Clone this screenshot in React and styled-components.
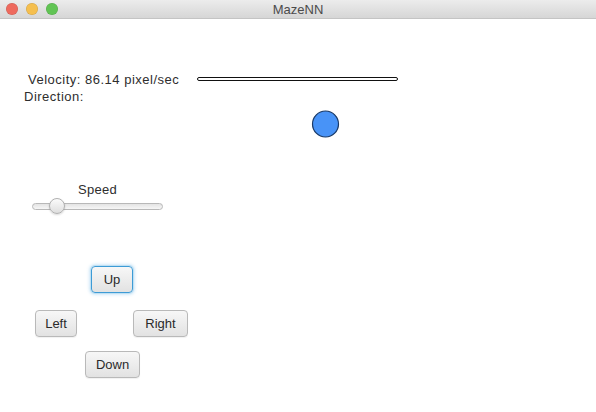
import React from "react";
import styled, { createGlobalStyle } from "styled-components";

const GlobalStyle = createGlobalStyle`
  html, body {
    margin: 0;
    padding: 0;
    background: #ffffff;
  }
  body {
    font-family: "Liberation Sans", Arial, sans-serif;
    overflow: hidden;
  }
`;

const Window = styled.div`
  width: 596px;
  height: 412px;
  display: flex;
  flex-direction: column;
  background: #ffffff;
`;

const TitleBar = styled.div`
  flex: none;
  height: 18px;
  display: grid;
  grid-template-columns: 1fr auto 1fr;
  align-items: center;
  background: linear-gradient(#ececec, #d6d6d6);
  border-bottom: 1px solid #c4c4c4;
`;

const Lights = styled.div`
  display: flex;
  gap: 8px;
  padding-left: 6px;
`;

const Light = styled.span`
  width: 12px;
  height: 12px;
  border-radius: 50%;
  background: ${(p) => p.$color};
  box-shadow: inset 0 0 0 0.5px rgba(0, 0, 0, 0.15);
`;

const Title = styled.div`
  font-size: 13px;
  color: #4b4b4b;
`;

const Content = styled.div`
  flex: 1;
  display: flex;
`;

const LeftPanel = styled.div`
  width: 190px;
  display: flex;
  flex-direction: column;
`;

const Info = styled.div`
  padding-top: 52px;
  font-size: 13px;
  line-height: 17px;
  letter-spacing: 0.5px;
  color: #2e2e2e;
`;

const InfoLine = styled.div`
  padding-left: ${(p) => p.$indent}px;
  white-space: nowrap;
`;

const SpeedBox = styled.div`
  width: 131px;
  margin: 77px 0 0 32px;
  display: flex;
  flex-direction: column;
  align-items: center;
`;

const SpeedLabel = styled.div`
  font-size: 13px;
  line-height: 15px;
  letter-spacing: 0.3px;
  color: #2e2e2e;
`;

const Slider = styled.div`
  position: relative;
  width: 100%;
  height: 16px;
  margin-top: 1px;
  display: flex;
  align-items: center;
`;

const Track = styled.div`
  width: 100%;
  height: 5px;
  border: 1px solid #b8b8b8;
  border-radius: 4px;
  background: linear-gradient(#e4e4e4, #f6f6f6);
`;

const Thumb = styled.div`
  position: absolute;
  top: 0;
  left: ${(p) => p.$pos}px;
  width: 16px;
  height: 16px;
  box-sizing: border-box;
  border-radius: 50%;
  border: 1px solid #b0b0b0;
  background: linear-gradient(#fbfbfb, #dedede);
  box-shadow: 0 1px 2px rgba(0, 0, 0, 0.15);
`;

const DPad = styled.div`
  margin-top: 52px;
  display: flex;
  flex-direction: column;
`;

const PadRow = styled.div`
  display: flex;
  margin-top: ${(p) => p.$top || 0}px;
`;

const Button = styled.button`
  width: ${(p) => p.$w}px;
  height: 27px;
  margin-left: ${(p) => p.$left}px;
  padding: 0;
  box-sizing: border-box;
  font-family: "Liberation Sans", Arial, sans-serif;
  font-size: 13px;
  color: #2a2a2a;
  border-radius: 4px;
  border: 1px solid ${(p) => (p.$focused ? "#3d9bd6" : "#b9b9b9")};
  background: linear-gradient(#f7f7f7, #e2e2e2);
  box-shadow: ${(p) =>
    p.$focused
      ? "0 0 0 1px #bfe0f3, 0 0 3px 2px rgba(150, 205, 240, 0.45)"
      : "0 1px 1px rgba(0, 0, 0, 0.06)"};
  outline: none;
`;

const Field = styled.svg`
  flex: none;
  margin-top: 41px;
`;

export default function App() {
  return (
    <>
      <GlobalStyle />
      <Window>
        <TitleBar>
          <Lights>
            <Light $color="#ee6a5e" />
            <Light $color="#f5bf4f" />
            <Light $color="#61c454" />
          </Lights>
          <Title>MazeNN</Title>
          <div />
        </TitleBar>
        <Content>
          <LeftPanel>
            <Info>
              <InfoLine $indent={28}>Velocity: 86.14 pixel/sec</InfoLine>
              <InfoLine $indent={24}>Direction:</InfoLine>
            </Info>
            <SpeedBox>
              <SpeedLabel>Speed</SpeedLabel>
              <Slider>
                <Track />
                <Thumb $pos={17} />
              </Slider>
            </SpeedBox>
            <DPad>
              <PadRow>
                <Button $w={42} $left={91} $focused>
                  Up
                </Button>
              </PadRow>
              <PadRow $top={17}>
                <Button $w={42} $left={35}>
                  Left
                </Button>
                <Button $w={55} $left={56}>
                  Right
                </Button>
              </PadRow>
              <PadRow $top={14}>
                <Button $w={55} $left={85}>
                  Down
                </Button>
              </PadRow>
            </DPad>
          </LeftPanel>
          <Field width="220" height="90" viewBox="0 0 220 90">
            <rect
              x="7.5"
              y="17.5"
              width="200"
              height="3"
              rx="1.5"
              fill="#ffffff"
              stroke="#111111"
              strokeWidth="1"
            />
            <circle
              cx="135.5"
              cy="64"
              r="13"
              fill="#4893f7"
              stroke="#1b3a66"
              strokeWidth="1.2"
            />
          </Field>
        </Content>
      </Window>
    </>
  );
}
